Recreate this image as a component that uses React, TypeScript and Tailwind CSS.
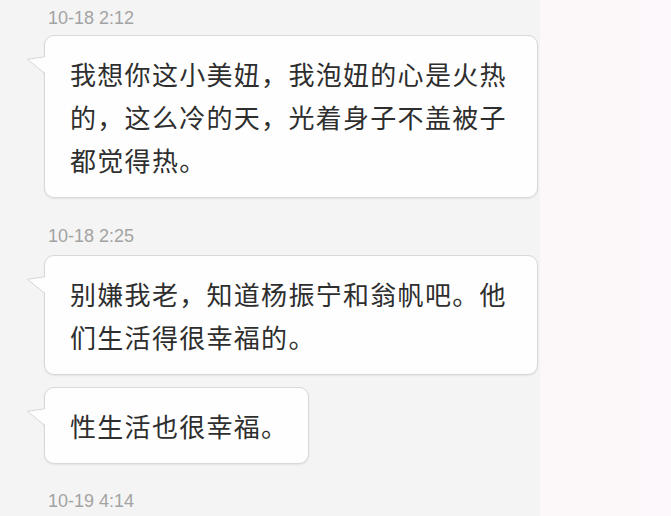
const CJK = '"Noto Sans CJK SC", "Noto Sans", sans-serif';

type Msg = { time?: string; bubbles: { text: string; wide?: boolean }[] };

const messages: Msg[] = [
  {
    time: "10-18 2:12",
    bubbles: [
      {
        text: "我想你这小美妞，我泡妞的心是火热的，这么冷的天，光着身子不盖被子都觉得热。",
        wide: true,
      },
    ],
  },
  {
    time: "10-18 2:25",
    bubbles: [
      { text: "别嫌我老，知道杨振宁和翁帆吧。他们生活得很幸福的。", wide: true },
      { text: "性生活也很幸福。" },
    ],
  },
];

function Tail() {
  return (
    <svg
      className="absolute left-[-18px] top-[20px]"
      width="20"
      height="19"
      viewBox="0 0 20 19"
    >
      <polygon points="0.5,3.3 19,0.6 19,17.6" fill="#fefefe" />
      <polyline
        points="17.6,0.8 0.5,3.3 17.6,17.4"
        fill="none"
        stroke="#d6d6d6"
        strokeWidth="1"
      />
    </svg>
  );
}

function Bubble({ text, wide }: { text: string; wide?: boolean }) {
  return (
    <div
      className={`relative rounded-[10px] border border-[#d8d8d8] bg-[#fefefe] pl-[25px] pr-[20px] py-[16px] text-[26px] leading-[43px] tracking-[1.3px] text-[#2e2e2e] shadow-[0_1px_2px_rgba(0,0,0,0.07)] ${
        wide ? "w-[494px]" : "w-fit"
      }`}
    >
      <Tail />
      {text}
    </div>
  );
}

function Time({ value }: { value: string }) {
  return (
    <div
      className="pl-[48px] text-[18px] leading-[20px] text-[#a3a3a3]"
      style={{ fontFamily: '"Liberation Sans", Arial, sans-serif' }}
    >
      {value}
    </div>
  );
}

export default function App() {
  return (
    <div className="flex h-[516px] w-[671px] overflow-hidden" style={{ fontFamily: CJK }}>
      <div className="w-[540px] bg-[#f4f4f4] pt-[8px]">
        <Time value={messages[0].time!} />
        <div className="ml-[44px] mt-[7px]">
          <Bubble {...messages[0].bubbles[0]} />
        </div>

        <div className="mt-[28px]">
          <Time value={messages[1].time!} />
        </div>
        <div className="ml-[44px] mt-[9px] flex flex-col gap-[12px]">
          {messages[1].bubbles.map((b, i) => (
            <Bubble key={i} {...b} />
          ))}
        </div>

        <div className="mt-[27px]">
          <Time value="10-19 4:14" />
        </div>
      </div>
      <div className="w-[98px] bg-[#fcf7f9]" />
      <div className="flex-1 bg-[#fcf8fc]" />
    </div>
  );
}
